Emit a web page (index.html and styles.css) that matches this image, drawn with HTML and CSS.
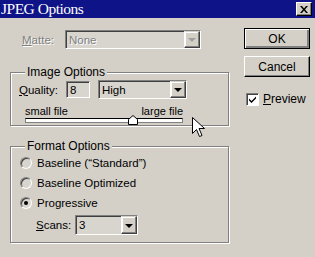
FILE: index.html
```html
<!DOCTYPE html>
<html lang="en">
<head>
    <meta charset="UTF-8">
    <title>JPEG Options</title>
    <link rel="stylesheet" href="styles.css">
</head>
<body>
    <div class="dialog">
        <div class="titlebar">
            <span class="title">JPEG Options</span>
            <span class="close">
                <svg width="8" height="7" viewBox="0 0 8 7"><path d="M0 0h2l2 2.5L6 0h2L5 3.5 8 7H6L4 4.5 2 7H0l3-3.5z" fill="#000"/></svg>
            </span>
        </div>

        <div class="main">
            <div class="left">
                <div class="matte-row">
                    <span class="label disabled"><u>M</u>atte:</span>
                    <div class="field select matte-select">
                        <span class="value disabled">None</span>
                        <span class="drop"><span class="arrow gray"></span></span>
                    </div>
                </div>

                <fieldset class="group image-group">
                    <legend>Image Options</legend>
                    <div class="quality-row">
                        <span class="label quality-label"><u>Q</u>uality:</span>
                        <div class="field quality-input"><span class="value">8</span></div>
                        <div class="field select high-select">
                            <span class="value">High</span>
                            <span class="drop"><span class="arrow"></span></span>
                        </div>
                    </div>
                    <div class="slider">
                        <div class="slider-labels">
                            <span>small file</span>
                            <span>large file</span>
                        </div>
                        <div class="track">
                            <svg class="thumb" width="10" height="10" viewBox="0 0 10 10"><polygon points="0.5,9.5 0.5,4.5 5,0.5 9.5,4.5 9.5,9.5" fill="#fff" stroke="#000"/></svg>
                        </div>
                    </div>
                </fieldset>

                <fieldset class="group format-group">
                    <legend>Format Options</legend>
                    <div class="radio-row"><span class="radio"></span>Baseline (&ldquo;Standard&rdquo;)</div>
                    <div class="radio-row"><span class="radio"></span>Baseline Optimized</div>
                    <div class="radio-row"><span class="radio checked"></span>Progressive</div>
                    <div class="scans-row">
                        <span class="label scans-label"><u>S</u>cans:</span>
                        <div class="field select scans-select">
                            <span class="value">3</span>
                            <span class="drop"><span class="arrow"></span></span>
                        </div>
                    </div>
                </fieldset>
            </div>

            <div class="right">
                <div class="button default">OK</div>
                <div class="button">Cancel</div>
                <div class="check-row">
                    <span class="checkbox">
                        <svg width="9" height="9" viewBox="0 0 9 9"><path d="M1 3.5l2.5 2.5L8 1.5v2L3.5 8 1 5.5z" fill="#000"/></svg>
                    </span>
                    <span><u>P</u>review</span>
                </div>
            </div>
        </div>

        <svg class="cursor" width="14" height="21" viewBox="0 0 14 21"><path d="M0.5 0.5V16.5L4.5 12.5L7.5 19.5L10 18.5L7 11.5H12.5Z" fill="#fff" stroke="#000"/></svg>
    </div>
</body>
</html>
```

FILE: styles.css
```css
body {
    margin: 0;
    font-family: "Liberation Sans", Arial, sans-serif;
    font-size: 11.5px;
    color: #000;
}
.dialog {
    position: relative;
    width: 315px;
    height: 257px;
    background-color: #d4d0c8;
    overflow: hidden;
}
.titlebar {
    height: 18px;
    background-color: #0e1488;
    display: flex;
    align-items: center;
    justify-content: space-between;
    padding-right: 3px;
}
.title {
    font-family: "Liberation Serif", "Times New Roman", serif;
    font-size: 15.5px;
    letter-spacing: -0.5px;
    color: #fff;
    line-height: 18px;
    padding-left: 1px;
}
.close {
    width: 14px;
    height: 12px;
    background-color: #d4d0c8;
    border: 1px solid;
    border-color: #fff #000 #000 #fff;
    box-shadow: inset -1px -1px 0 #808080;
    display: flex;
    align-items: center;
    justify-content: center;
}
.main {
    display: flex;
    padding: 10px 0 0 10px;
}
.left {
    width: 219px;
}
.label u, .check-row u {
    text-decoration: underline;
}
.disabled {
    color: #808080;
    text-shadow: 1px 1px 0 #fff;
}

/* fields */
.field {
    box-sizing: border-box;
    border: 1px solid;
    border-color: #808080 #fff #fff #808080;
    box-shadow: inset 1px 1px 0 #404040;
    background-color: #d8d5cf;
    display: flex;
    align-items: center;
    justify-content: space-between;
}
.field .value {
    padding-left: 3px;
    line-height: 14px;
}
.drop {
    box-sizing: border-box;
    width: 16px;
    height: 100%;
    border: 1px solid;
    border-color: #d4d0c8 #404040 #404040 #fff;
    box-shadow: inset -1px -1px 0 #808080, inset 1px 1px 0 #fff;
    background-color: #d4d0c8;
    display: flex;
    align-items: center;
    justify-content: center;
    padding-top: 1px;
}
.arrow {
    width: 0;
    height: 0;
    border-left: 4px solid transparent;
    border-right: 4px solid transparent;
    border-top: 4px solid #000;
}
.arrow.gray {
    border-top-color: #a0a0a0;
}

.matte-row {
    display: flex;
    align-items: center;
    height: 19px;
    margin-top: 2px;
    padding-left: 12px;
}
.matte-row .label {
    width: 43px;
}
.matte-select {
    width: 136px;
    height: 19px;
}

/* group boxes */
.group {
    margin: 16px 0 0 0;
    padding: 0;
    border: 1px solid #808080;
    box-shadow: inset 1px 1px 0 #fff, 1px 1px 0 #fff;
    min-width: 0;
}
.group legend {
    margin-left: 14px;
    padding: 0 2px;
    line-height: 14px;
    font-size: 12px;
    background-color: #d4d0c8;
}
.image-group {
    height: 61px;
    box-sizing: border-box;
}
.quality-row {
    display: flex;
    align-items: center;
    margin-top: 1px;
    padding-left: 8px;
    height: 19px;
}
.quality-label {
    width: 47px;
}
.quality-input {
    width: 24px;
    height: 17px;
}
.high-select {
    width: 89px;
    height: 19px;
    margin-left: 8px;
}
.slider {
    margin: 7px 0 0 14px;
    width: 158px;
}
.slider-labels {
    display: flex;
    justify-content: space-between;
    font-size: 11px;
    line-height: 11px;
}
.track {
    position: relative;
    box-sizing: border-box;
    height: 5px;
    margin-top: 1px;
    background-color: #fff;
    border: 1px solid;
    border-color: #000 #808080 #808080 #808080;
}
.thumb {
    position: absolute;
    left: 102px;
    top: -4px;
}

.format-group {
    margin-top: 13px;
    height: 104px;
    box-sizing: border-box;
}
.radio-row {
    display: flex;
    align-items: center;
    height: 20px;
    padding-left: 9px;
}
.radio {
    box-sizing: border-box;
    width: 12px;
    height: 12px;
    border-radius: 50%;
    border: 1px solid;
    border-color: #808080 #fff #fff #808080;
    box-shadow: inset 1px 1px 0 #404040;
    background-color: #d8d5cf;
    margin-right: 5px;
    display: flex;
    align-items: center;
    justify-content: center;
}
.radio.checked::after {
    content: "";
    width: 4px;
    height: 4px;
    border-radius: 50%;
    background-color: #000;
}
.scans-row {
    display: flex;
    align-items: center;
    margin-top: 2px;
    padding-left: 25px;
}
.scans-label {
    width: 39px;
}
.scans-select {
    width: 63px;
    height: 20px;
}

/* buttons */
.right {
    margin-left: 15px;
    width: 66px;
    display: flex;
    flex-direction: column;
    gap: 7px;
}
.button {
    box-sizing: border-box;
    height: 21px;
    border: 1px solid;
    border-color: #fff #000 #000 #fff;
    box-shadow: inset -1px -1px 0 #808080;
    display: flex;
    align-items: center;
    justify-content: center;
    font-size: 12px;
}
.button.default {
    border-color: #000;
    box-shadow: inset 1px 1px 0 #fff, inset -2px -2px 0 #808080;
}
.check-row {
    display: flex;
    align-items: center;
    margin: 8px 0 0 2px;
    font-size: 12px;
}
.checkbox {
    box-sizing: border-box;
    width: 13px;
    height: 13px;
    border: 1px solid;
    border-color: #808080 #fff #fff #808080;
    box-shadow: inset 1px 1px 0 #404040;
    background-color: #fff;
    margin-right: 4px;
    display: flex;
    align-items: center;
    justify-content: center;
}

.cursor {
    position: absolute;
    left: 192px;
    top: 117px;
}
```
